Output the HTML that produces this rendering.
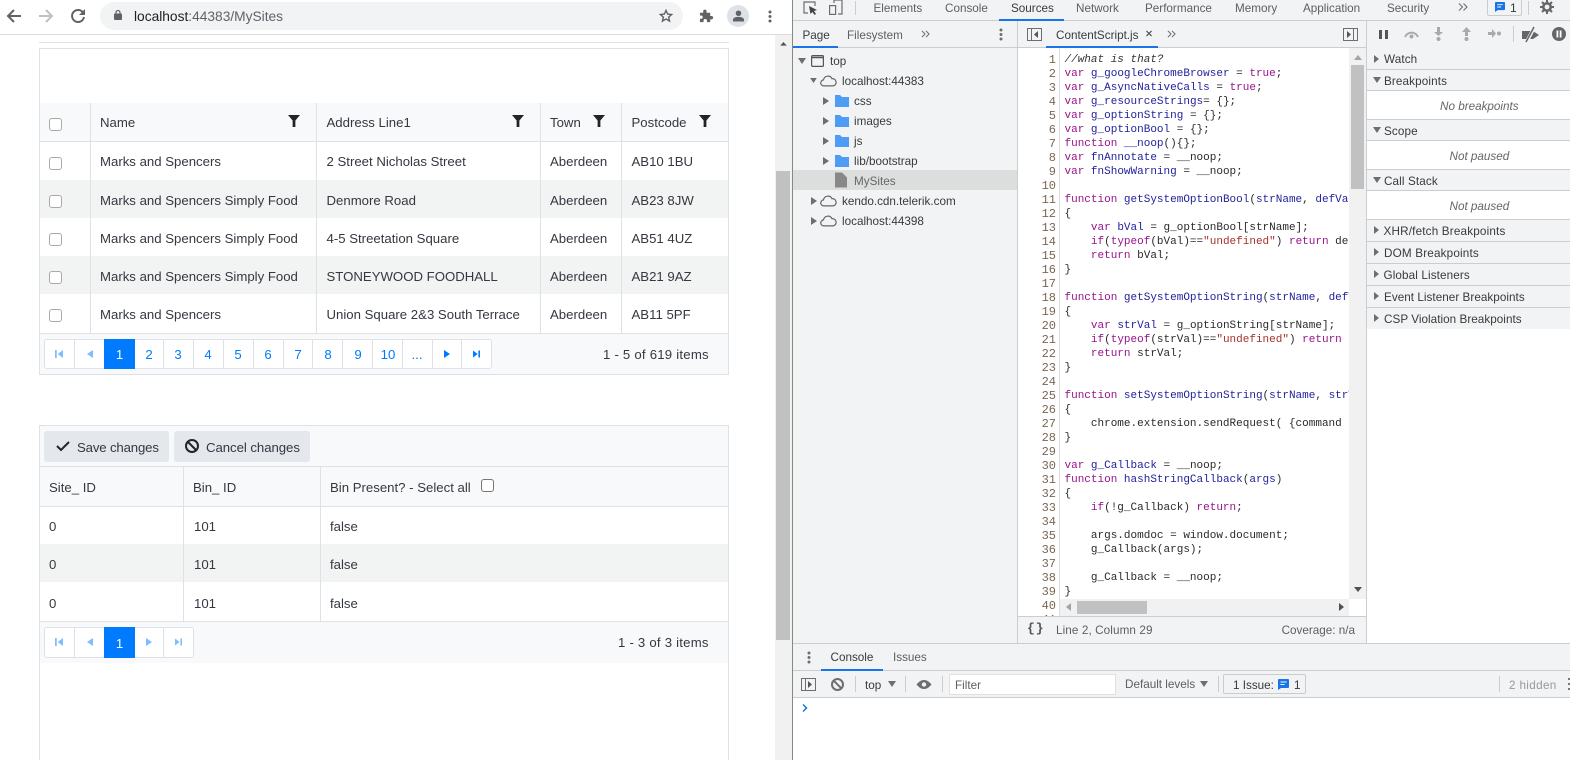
<!DOCTYPE html>
<html><head><meta charset="utf-8"><title>MySites</title>
<style>
html,body{margin:0;padding:0;width:1570px;height:760px;overflow:hidden;background:#fff}
body{position:relative;font-family:"Liberation Sans",sans-serif}
.b{position:absolute;display:block}
.t{position:absolute;white-space:nowrap;line-height:20px;font-size:13.2px;color:#343840}
.d{font-size:11.7px;color:#5f5f5f}
.c{font-size:11.7px;color:#3a3a3a}
.l{letter-spacing:.12px}
.p{position:absolute;width:11px;height:11px;border:1px solid #a9a9a9;border-radius:3px;background:#fff;box-sizing:content-box}
svg{position:absolute;display:block;overflow:visible}
.n{color:#007bff;text-align:center;width:30px;font-size:13.2px}
pre{position:absolute;margin:0;font:11px/14px "Liberation Mono",monospace;color:#2a2a2a}
i.k{font-style:normal;color:#96138a}
i.v{font-style:normal;color:#1f1f9a}
i.s{font-style:normal;color:#a5332a}
</style></head><body>

<!-- Chrome toolbar -->
<div class="b" style="left:0;top:0;width:792px;height:34px;background:#fff"></div>
<div class="b" style="left:0;top:34px;width:792px;height:1px;background:#dadce0"></div>
<svg style="left:6px;top:9px" width="15" height="14" viewBox="0 0 15 14"><path d="M15 7H2M8 1L2 7l6 6" fill="none" stroke="#5f6368" stroke-width="2"/></svg>
<svg style="left:39px;top:9px" width="15" height="14" viewBox="0 0 15 14"><path d="M0 7h13M7 1l6 6-6 6" fill="none" stroke="#bdc1c6" stroke-width="2"/></svg>
<svg style="left:70px;top:8px" width="16" height="16" viewBox="0 0 16 16"><path d="M13.300 5A6 6 0 1 0 14 9" fill="none" stroke="#5f6368" stroke-width="2"/><path d="M15 1v6H9z" fill="#5f6368"/></svg>
<div class="b" style="left:100px;top:2px;width:583px;height:28px;border-radius:14px;background:#f1f3f4"></div>
<svg style="left:114px;top:10px" width="8" height="10" viewBox="0 0 8 10"><path d="M2 4V2.500a2 2 0 0 1 4 0V4" fill="none" stroke="#5f6368" stroke-width="1.200"/><rect x="0" y="3.500" width="8" height="6.500" rx="1" fill="#5f6368"/></svg>
<span class="t" style="left:134px;top:7px;font-size:13.75px;color:#5f6368"><span style="color:#202124">localhost</span>:44383/MySites</span>
<svg style="left:659px;top:9px" width="14" height="14" viewBox="0 0 15 15"><path d="M7.500 1.500l1.800 4 4.200.4-3.200 2.900 1 4.200-3.800-2.200-3.800 2.200 1-4.200L1.500 5.900l4.200-.4z" fill="none" stroke="#5f6368" stroke-width="1.500"/></svg>
<svg style="left:699px;top:9px" width="14" height="14" viewBox="0 0 15 15"><path d="M1 4h3.500V2.500a1.800 1.800 0 0 1 3.600 0V4H12v3.500h1.300a1.800 1.800 0 0 1 0 3.600H12V14H8.500v-1.500a1.800 1.800 0 0 0-3.600 0V14H1v-3.500h1.200a1.800 1.800 0 0 0 0-3.600H1z" fill="#5f6368"/></svg>
<div class="b" style="left:727px;top:5px;width:22px;height:22px;border-radius:11px;background:#dee1e6"></div>
<svg style="left:733px;top:10px" width="11" height="12" viewBox="0 0 12 12"><circle cx="6" cy="3" r="3" fill="#5f6368"/><path d="M0 12V10c0-2 3-3 6-3s6 1 6 3v2z" fill="#5f6368"/></svg>
<svg style="left:768px;top:10px" width="4" height="13" viewBox="0 0 4 13"><circle cx="2" cy="2" r="1.500" fill="#5f6368"/><circle cx="2" cy="6.500" r="1.500" fill="#5f6368"/><circle cx="2" cy="11" r="1.500" fill="#5f6368"/></svg>

<!-- page top fragment -->
<div class="b" style="left:39px;top:42px;width:690px;height:1px;background:#e1e1e1"></div>

<!-- Scrollbar -->
<div class="b" style="left:775px;top:35px;width:17px;height:725px;background:#f1f1f1"></div>
<div class="b" style="left:776px;top:171px;width:14px;height:469px;background:#c1c1c1"></div>
<svg style="left:780px;top:42px" width="7" height="4" viewBox="0 0 8 5"><path d="M4 0l4 4.500H0z" fill="#505050"/></svg>

<!-- Grid 1 -->
<div class="b" style="left:39px;top:48px;width:690px;height:327px;box-sizing:border-box;border:1px solid #dee2e6;background:#fff"></div>
<div class="b" style="left:40px;top:103px;width:688px;height:38px;background:#f8f9fa"></div>
<div class="b" style="left:40px;top:141px;width:688px;height:1px;background:#dee2e6"></div>
<div class="b" style="left:40px;top:180px;width:688px;height:38px;background:#f2f3f3"></div>
<div class="b" style="left:40px;top:256px;width:688px;height:38px;background:#f2f3f3"></div>
<div class="b" style="left:40px;top:333px;width:688px;height:1px;background:#dee2e6"></div>
<div class="b" style="left:40px;top:334px;width:688px;height:40px;background:#f8f9fa"></div>
<div class="b" style="left:90px;top:103px;width:1px;height:230px;background:#dee2e6"></div>
<div class="b" style="left:316px;top:103px;width:1px;height:230px;background:#dee2e6"></div>
<div class="b" style="left:540px;top:103px;width:1px;height:230px;background:#dee2e6"></div>
<div class="b" style="left:621px;top:103px;width:1px;height:230px;background:#dee2e6"></div>

<div class="p" style="left:49px;top:118px"></div>
<div class="p" style="left:49px;top:157px"></div>
<div class="p" style="left:49px;top:195px"></div>
<div class="p" style="left:49px;top:233px"></div>
<div class="p" style="left:49px;top:271px"></div>
<div class="p" style="left:49px;top:309px"></div>

<span class="t" style="left:100px;top:113px">Name</span>
<span class="t" style="left:326.500px;top:113px">Address Line1</span>
<span class="t" style="left:550px;top:113px">Town</span>
<span class="t" style="left:631.500px;top:113px">Postcode</span>
<svg style="left:288px;top:115px" width="12" height="12" viewBox="0 0 13 13"><path d="M0 0h13L8 6v7H5V6z" fill="#212529"/></svg>
<svg style="left:512px;top:115px" width="12" height="12" viewBox="0 0 13 13"><path d="M0 0h13L8 6v7H5V6z" fill="#212529"/></svg>
<svg style="left:593px;top:115px" width="12" height="12" viewBox="0 0 13 13"><path d="M0 0h13L8 6v7H5V6z" fill="#212529"/></svg>
<svg style="left:699px;top:115px" width="12" height="12" viewBox="0 0 13 13"><path d="M0 0h13L8 6v7H5V6z" fill="#212529"/></svg>

<span class="t" style="left:100px;top:152px">Marks and Spencers</span>
<span class="t" style="left:326.500px;top:152px">2 Street Nicholas Street</span>
<span class="t" style="left:550px;top:152px">Aberdeen</span>
<span class="t" style="left:631.500px;top:152px">AB10 1BU</span>
<span class="t" style="left:100px;top:191px">Marks and Spencers Simply Food</span>
<span class="t" style="left:326.500px;top:191px">Denmore Road</span>
<span class="t" style="left:550px;top:191px">Aberdeen</span>
<span class="t" style="left:631.500px;top:191px">AB23 8JW</span>
<span class="t" style="left:100px;top:229px">Marks and Spencers Simply Food</span>
<span class="t" style="left:326.500px;top:229px">4-5 Streetation Square</span>
<span class="t" style="left:550px;top:229px">Aberdeen</span>
<span class="t" style="left:631.500px;top:229px">AB51 4UZ</span>
<span class="t" style="left:100px;top:267px">Marks and Spencers Simply Food</span>
<span class="t" style="left:326.500px;top:267px">STONEYWOOD FOODHALL</span>
<span class="t" style="left:550px;top:267px">Aberdeen</span>
<span class="t" style="left:631.500px;top:267px">AB21 9AZ</span>
<span class="t" style="left:100px;top:305px">Marks and Spencers</span>
<span class="t" style="left:326.500px;top:305px">Union Square 2&amp;3 South Terrace</span>
<span class="t" style="left:550px;top:305px">Aberdeen</span>
<span class="t" style="left:631.500px;top:305px">AB11 5PF</span>

<!-- Pager 1 -->
<div class="b" style="left:44px;top:339px;width:448px;height:30px;box-sizing:border-box;border:1px solid #dee2e6;border-radius:3px;background:#fff"></div>
<div class="b" style="left:74px;top:340px;width:1px;height:28px;background:#dee2e6"></div>
<div class="b" style="left:163px;top:340px;width:1px;height:28px;background:#dee2e6"></div>
<div class="b" style="left:193px;top:340px;width:1px;height:28px;background:#dee2e6"></div>
<div class="b" style="left:223px;top:340px;width:1px;height:28px;background:#dee2e6"></div>
<div class="b" style="left:253px;top:340px;width:1px;height:28px;background:#dee2e6"></div>
<div class="b" style="left:283px;top:340px;width:1px;height:28px;background:#dee2e6"></div>
<div class="b" style="left:312px;top:340px;width:1px;height:28px;background:#dee2e6"></div>
<div class="b" style="left:342px;top:340px;width:1px;height:28px;background:#dee2e6"></div>
<div class="b" style="left:372px;top:340px;width:1px;height:28px;background:#dee2e6"></div>
<div class="b" style="left:402px;top:340px;width:1px;height:28px;background:#dee2e6"></div>
<div class="b" style="left:432px;top:340px;width:1px;height:28px;background:#dee2e6"></div>
<div class="b" style="left:461px;top:340px;width:1px;height:28px;background:#dee2e6"></div>
<div class="b" style="left:104px;top:339px;width:31px;height:30px;background:#007bff"></div>
<svg style="left:55px;top:350px" width="8" height="8" viewBox="0 0 9 9"><path d="M0 0h2v9H0zM9 0v9L3 4.500z" fill="#7fbdff"/></svg>
<svg style="left:87px;top:350px" width="6" height="8" viewBox="0 0 6 8"><path d="M6 0v8L0 4z" fill="#7fbdff"/></svg>
<span class="t" style="left:104px;top:345px;width:31px;text-align:center;color:#fff;font-size:13.2px">1</span>
<span class="t n" style="left:134px;top:345px">2</span>
<span class="t n" style="left:163px;top:345px">3</span>
<span class="t n" style="left:193px;top:345px">4</span>
<span class="t n" style="left:223px;top:345px">5</span>
<span class="t n" style="left:253px;top:345px">6</span>
<span class="t n" style="left:283px;top:345px">7</span>
<span class="t n" style="left:313px;top:345px">8</span>
<span class="t n" style="left:343px;top:345px">9</span>
<span class="t n" style="left:373px;top:345px">10</span>
<span class="t n" style="left:402px;top:345px">...</span>
<svg style="left:444px;top:350px" width="6" height="8" viewBox="0 0 6 8"><path d="M0 0v8l6-4z" fill="#007bff"/></svg>
<svg style="left:473px;top:350px" width="7" height="8" viewBox="0 0 9 9"><path d="M7 0h2v9H7zM0 0v9l6-4.500z" fill="#007bff"/></svg>
<span class="t" style="left:603px;top:345px;letter-spacing:.22px">1 - 5 of 619 items</span>

<!-- Grid 2 -->
<div class="b" style="left:39px;top:425px;width:690px;height:340px;box-sizing:border-box;border:1px solid #dee2e6;background:#fff"></div>
<div class="b" style="left:40px;top:426px;width:688px;height:80px;background:#f8f9fa"></div>
<div class="b" style="left:40px;top:466px;width:688px;height:1px;background:#dee2e6"></div>
<div class="b" style="left:40px;top:506px;width:688px;height:1px;background:#dee2e6"></div>
<div class="b" style="left:40px;top:544px;width:688px;height:38px;background:#f2f3f3"></div>
<div class="b" style="left:40px;top:621px;width:688px;height:1px;background:#dee2e6"></div>
<div class="b" style="left:40px;top:622px;width:688px;height:41px;background:#f8f9fa"></div>
<div class="b" style="left:183px;top:467px;width:1px;height:154px;background:#dee2e6"></div>
<div class="b" style="left:320px;top:467px;width:1px;height:154px;background:#dee2e6"></div>
<div class="b" style="left:44px;top:431px;width:125px;height:31px;border-radius:3px;background:#e4e7eb"></div>
<div class="b" style="left:174px;top:431px;width:136px;height:31px;border-radius:3px;background:#e4e7eb"></div>
<svg style="left:56px;top:441px" width="14" height="10" viewBox="0 0 14 10"><path d="M1 5l4 4L13 1" fill="none" stroke="#212529" stroke-width="2"/></svg>
<svg style="left:185px;top:439px" width="14" height="14" viewBox="0 0 14 14"><circle cx="7" cy="7" r="6" fill="none" stroke="#212529" stroke-width="2"/><path d="M3 3l8 8" stroke="#212529" stroke-width="2"/></svg>
<span class="t" style="left:77px;top:438px;letter-spacing:-.15px">Save changes</span>
<span class="t" style="left:206px;top:438px;letter-spacing:-.05px">Cancel changes</span>
<span class="t" style="left:49px;top:478px">Site_ ID</span>
<span class="t" style="left:193px;top:478px">Bin_ ID</span>
<span class="t" style="left:330px;top:478px">Bin Present? - Select all</span>
<div class="p" style="left:481px;top:479px;border-color:#767676"></div>
<span class="t" style="left:49px;top:517px">0</span><span class="t" style="left:194px;top:517px">101</span><span class="t" style="left:330px;top:517px">false</span>
<span class="t" style="left:49px;top:555px">0</span><span class="t" style="left:194px;top:555px">101</span><span class="t" style="left:330px;top:555px">false</span>
<span class="t" style="left:49px;top:594px">0</span><span class="t" style="left:194px;top:594px">101</span><span class="t" style="left:330px;top:594px">false</span>
<!-- Pager 2 -->
<div class="b" style="left:44px;top:627px;width:150px;height:31px;box-sizing:border-box;border:1px solid #dee2e6;border-radius:3px;background:#fff"></div>
<div class="b" style="left:74px;top:628px;width:1px;height:29px;background:#dee2e6"></div>
<div class="b" style="left:163px;top:628px;width:1px;height:29px;background:#dee2e6"></div>
<div class="b" style="left:104px;top:627px;width:31px;height:31px;background:#007bff"></div>
<svg style="left:55px;top:638px" width="8" height="8" viewBox="0 0 9 9"><path d="M0 0h2v9H0zM9 0v9L3 4.500z" fill="#7fbdff"/></svg>
<svg style="left:87px;top:638px" width="6" height="8" viewBox="0 0 6 8"><path d="M6 0v8L0 4z" fill="#7fbdff"/></svg>
<span class="t" style="left:104px;top:634px;width:31px;text-align:center;color:#fff">1</span>
<svg style="left:146px;top:638px" width="6" height="8" viewBox="0 0 6 8"><path d="M0 0v8l6-4z" fill="#7fbdff"/></svg>
<svg style="left:175px;top:638px" width="7" height="8" viewBox="0 0 9 9"><path d="M7 0h2v9H7zM0 0v9l6-4.500z" fill="#7fbdff"/></svg>
<span class="t" style="left:618px;top:633px;letter-spacing:.22px">1 - 3 of 3 items</span>

<!-- DEVTOOLS -->
<div class="b" style="left:792px;top:0;width:1px;height:760px;background:#888"></div>
<div class="b" style="left:793px;top:0;width:777px;height:644px;background:#f1f3f4"></div>
<div class="b" style="left:793px;top:20px;width:777px;height:1px;background:#cbcdd1"></div>
<svg style="left:803px;top:1px" width="15" height="14" viewBox="0 0 15 14"><path d="M5 12H1V1h11v4" fill="none" stroke="#6e6e6e" stroke-width="1.200"/><path d="M6 5l8 4-3 1 2 3-1.500 1-2-3-2 2z" fill="#444"/></svg>
<svg style="left:829px;top:0" width="14" height="15" viewBox="0 0 14 15"><path d="M5 3V0h8v14H9" fill="none" stroke="#6e6e6e" stroke-width="1.200"/><rect x=".6" y="5.600" width="6" height="8.800" fill="none" stroke="#6e6e6e" stroke-width="1.200"/></svg>
<div class="b" style="left:855px;top:1px;width:1px;height:14px;background:#ccc"></div>
<span class="t d" style="left:873.500px;top:-1px">Elements</span>
<span class="t d" style="left:945px;top:-1px">Console</span>
<span class="t c" style="left:1011px;top:-1px">Sources</span>
<span class="t d" style="left:1076px;top:-1px">Network</span>
<span class="t d" style="left:1145px;top:-1px">Performance</span>
<span class="t d" style="left:1235px;top:-1px">Memory</span>
<span class="t d" style="left:1303px;top:-1px">Application</span>
<span class="t d" style="left:1387px;top:-1px">Security</span>
<svg style="left:1458px;top:3px" width="10" height="8" viewBox="0 0 10 8"><path d="M1 .500L4.500 4 1 7.500M5.500 .500L9 4 5.500 7.500" fill="none" stroke="#6e6e6e" stroke-width="1.100"/></svg>
<div class="b" style="left:999px;top:19px;width:65px;height:2px;background:#1a73e8"></div>
<div class="b" style="left:1487px;top:-2px;width:35px;height:18px;box-sizing:border-box;border:1px solid #ccc;border-radius:2px"></div>
<svg style="left:1495px;top:2px" width="10" height="10" viewBox="0 0 11 11"><path d="M1 0h9a1 1 0 0 1 1 1v7a1 1 0 0 1-1 1H3l-3 2V1a1 1 0 0 1 1-1z" fill="#1a73e8"/><path d="M2.500 3h6M2.500 5.500h4" stroke="#fff"/></svg>
<span class="t c" style="left:1510px;top:-2px;font-size:12px">1</span>
<div class="b" style="left:1528px;top:1px;width:1px;height:14px;background:#ccc"></div>
<svg style="left:1540px;top:0" width="14" height="14" viewBox="0 0 14 14"><circle cx="7" cy="7" r="3.700" fill="none" stroke="#666" stroke-width="2.600"/><path d="M7 0v3M7 11v3M0 7h3M11 7h3M2 2l2 2M10 10l2 2M12 2l-2 2M2 12l2-2" stroke="#666" stroke-width="2"/></svg>

<!-- Nav panel -->
<div class="b" style="left:793px;top:47px;width:573px;height:1px;background:#cbcdd1"></div>
<span class="t c" style="left:802.500px;top:26px">Page</span>
<span class="t d" style="left:847px;top:26px">Filesystem</span>
<svg style="left:921px;top:30px" width="9" height="8" viewBox="0 0 10 8"><path d="M1 .500L4.500 4 1 7.500M5.500 .500L9 4 5.500 7.500" fill="none" stroke="#6e6e6e" stroke-width="1.100"/></svg>
<div class="b" style="left:793px;top:46px;width:45px;height:2px;background:#1a73e8"></div>
<svg style="left:999px;top:28px" width="4" height="13" viewBox="0 0 4 13"><circle cx="2" cy="2" r="1.500" fill="#6e6e6e"/><circle cx="2" cy="6.500" r="1.500" fill="#6e6e6e"/><circle cx="2" cy="11" r="1.500" fill="#6e6e6e"/></svg>
<div class="b" style="left:1017px;top:21px;width:1px;height:622px;background:#cbcdd1"></div>
<div class="b" style="left:793px;top:170px;width:224px;height:20px;background:#dcdedd"></div>
<svg style="left:798px;top:58px" width="8" height="6" viewBox="0 0 8 6"><path d="M0 0h8L4 6z" fill="#6e6e6e"/></svg>
<svg style="left:811px;top:55px" width="13" height="12" viewBox="0 0 13 12"><rect x=".6" y=".6" width="11.800" height="10.800" rx="1" fill="none" stroke="#555" stroke-width="1.200"/><path d="M1 2.500h11" stroke="#555" stroke-width="1.500"/></svg>
<span class="t c" style="left:830px;top:52px">top</span>
<svg style="left:810px;top:78px" width="7" height="5" viewBox="0 0 8 6"><path d="M0 0h8L4 6z" fill="#6e6e6e"/></svg>
<svg style="left:820px;top:75px" width="17" height="12" viewBox="0 0 17 11"><path d="M4 10.400a3 3 0 0 1-.5-6A4.500 4.500 0 0 1 12 3.200a3.600 3.600 0 0 1 1 7.200z" fill="none" stroke="#666" stroke-width="1.200"/></svg>
<span class="t c" style="left:842px;top:72px">localhost:44383</span>
<svg style="left:823px;top:97px" width="6" height="8" viewBox="0 0 6 8"><path d="M0 0v8l6-4z" fill="#6e6e6e"/></svg>
<svg style="left:835px;top:95px" width="14" height="12" viewBox="0 0 14 12"><path d="M0 0h5l2 2h7v10H0z" fill="#4f9cf5"/></svg>
<span class="t c" style="left:854px;top:92px">css</span>
<svg style="left:823px;top:117px" width="6" height="8" viewBox="0 0 6 8"><path d="M0 0v8l6-4z" fill="#6e6e6e"/></svg>
<svg style="left:835px;top:115px" width="14" height="12" viewBox="0 0 14 12"><path d="M0 0h5l2 2h7v10H0z" fill="#4f9cf5"/></svg>
<span class="t c" style="left:854px;top:112px">images</span>
<svg style="left:823px;top:137px" width="6" height="8" viewBox="0 0 6 8"><path d="M0 0v8l6-4z" fill="#6e6e6e"/></svg>
<svg style="left:835px;top:135px" width="14" height="12" viewBox="0 0 14 12"><path d="M0 0h5l2 2h7v10H0z" fill="#4f9cf5"/></svg>
<span class="t c" style="left:854px;top:132px">js</span>
<svg style="left:823px;top:157px" width="6" height="8" viewBox="0 0 6 8"><path d="M0 0v8l6-4z" fill="#6e6e6e"/></svg>
<svg style="left:835px;top:155px" width="14" height="12" viewBox="0 0 14 12"><path d="M0 0h5l2 2h7v10H0z" fill="#4f9cf5"/></svg>
<span class="t c" style="left:854px;top:152px">lib/bootstrap</span>
<svg style="left:835px;top:172px" width="12" height="16" viewBox="0 0 12 15"><path d="M0 0h7l5 5v10H0z" fill="#888"/></svg>
<span class="t" style="left:854px;top:172px;font-size:11.7px;color:#666">MySites</span>
<svg style="left:811px;top:197px" width="6" height="8" viewBox="0 0 6 8"><path d="M0 0v8l6-4z" fill="#6e6e6e"/></svg>
<svg style="left:820px;top:195px" width="17" height="12" viewBox="0 0 17 11"><path d="M4 10.400a3 3 0 0 1-.5-6A4.500 4.500 0 0 1 12 3.200a3.600 3.600 0 0 1 1 7.200z" fill="none" stroke="#666" stroke-width="1.200"/></svg>
<span class="t c" style="left:842px;top:192px">kendo.cdn.telerik.com</span>
<svg style="left:811px;top:217px" width="6" height="8" viewBox="0 0 6 8"><path d="M0 0v8l6-4z" fill="#6e6e6e"/></svg>
<svg style="left:820px;top:215px" width="17" height="12" viewBox="0 0 17 11"><path d="M4 10.400a3 3 0 0 1-.5-6A4.500 4.500 0 0 1 12 3.200a3.600 3.600 0 0 1 1 7.200z" fill="none" stroke="#666" stroke-width="1.200"/></svg>
<span class="t c" style="left:842px;top:212px">localhost:44398</span>

<!-- Editor -->
<svg style="left:1027px;top:28px" width="15" height="13" viewBox="0 0 15 13"><rect x=".5" y=".5" width="14" height="12" fill="none" stroke="#6e6e6e"/><path d="M4.500 0v13" stroke="#6e6e6e"/><path d="M11 3v7L7 6.500z" fill="#555"/></svg>
<span class="t c" style="left:1056px;top:26px">ContentScript.js</span>
<svg style="left:1146px;top:30px" width="6" height="7" viewBox="0 0 7 7"><path d="M.5.500l6 6M6.500.500l-6 6" stroke="#555" stroke-width="1.400"/></svg>
<svg style="left:1167px;top:30px" width="9" height="8" viewBox="0 0 10 8"><path d="M1 .500L4.500 4 1 7.500M5.500 .500L9 4 5.500 7.500" fill="none" stroke="#6e6e6e" stroke-width="1.100"/></svg>
<div class="b" style="left:1046px;top:46px;width:112px;height:2px;background:#1a73e8"></div>
<svg style="left:1343px;top:28px" width="15" height="13" viewBox="0 0 15 13"><rect x=".5" y=".5" width="14" height="12" fill="none" stroke="#6e6e6e"/><path d="M10.500 0v13" stroke="#6e6e6e"/><path d="M4 3v7l4-3.500z" fill="#555"/></svg>
<div class="b" style="left:1018px;top:48px;width:348px;height:568px;background:#fff"></div>
<div class="b" style="left:1018px;top:616px;width:348px;height:1px;background:#cbcdd1"></div>
<div class="b" style="left:1059px;top:48px;width:1px;height:568px;background:#ddd"></div>
<div class="b" style="left:1018px;top:48px;width:38px;height:568px;overflow:hidden">
<pre style="left:0;top:5px;width:38px;text-align:right;color:#7a6652;font-size:12px">1
2
3
4
5
6
7
8
9
10
11
12
13
14
15
16
17
18
19
20
21
22
23
24
25
26
27
28
29
30
31
32
33
34
35
36
37
38
39
40
41</pre></div>
<div class="b" style="left:1060px;top:48px;width:289px;height:551px;overflow:hidden">
<pre style="left:4.500px;top:5px"><i style="color:#333">//what is that?</i>
<i class="k">var</i> <i class="v">g_googleChromeBrowser</i> = <i class="k">true</i>;
<i class="k">var</i> <i class="v">g_AsyncNativeCalls</i> = <i class="k">true</i>;
<i class="k">var</i> <i class="v">g_resourceStrings</i>= {};
<i class="k">var</i> <i class="v">g_optionString</i> = {};
<i class="k">var</i> <i class="v">g_optionBool</i> = {};
<i class="k">function</i> <i class="v">__noop</i>(){};
<i class="k">var</i> <i class="v">fnAnnotate</i> = __noop;
<i class="k">var</i> <i class="v">fnShowWarning</i> = __noop;

<i class="k">function</i> <i class="v">getSystemOptionBool</i>(<i class="v">strName</i>, <i class="v">defVal</i>)
{
    <i class="k">var</i> <i class="v">bVal</i> = g_optionBool[strName];
    <i class="k">if</i>(<i class="k">typeof</i>(bVal)==<i class="s">"undefined"</i>) <i class="k">return</i> defVal;
    <i class="k">return</i> bVal;
}

<i class="k">function</i> <i class="v">getSystemOptionString</i>(<i class="v">strName</i>, <i class="v">defVal</i>)
{
    <i class="k">var</i> <i class="v">strVal</i> = g_optionString[strName];
    <i class="k">if</i>(<i class="k">typeof</i>(strVal)==<i class="s">"undefined"</i>) <i class="k">return</i> defVal;
    <i class="k">return</i> strVal;
}

<i class="k">function</i> <i class="v">setSystemOptionString</i>(<i class="v">strName</i>, <i class="v">strVal</i>)
{
    chrome.extension.sendRequest( {command : 1
}

<i class="k">var</i> <i class="v">g_Callback</i> = __noop;
<i class="k">function</i> <i class="v">hashStringCallback</i>(<i class="v">args</i>)
{
    <i class="k">if</i>(!g_Callback) <i class="k">return</i>;

    args.domdoc = window.document;
    g_Callback(args);

    g_Callback = __noop;
}</pre></div>
<!-- editor scrollbars -->
<div class="b" style="left:1349px;top:48px;width:17px;height:551px;background:#f1f1f1"></div>
<div class="b" style="left:1351px;top:65px;width:13px;height:124px;background:#c1c1c1"></div>
<svg style="left:1354px;top:55px" width="8" height="5" viewBox="0 0 8 5"><path d="M4 0l4 5H0z" fill="#a3a3a3"/></svg>
<svg style="left:1354px;top:587px" width="8" height="5" viewBox="0 0 8 5"><path d="M0 0h8L4 5z" fill="#505050"/></svg>
<div class="b" style="left:1060px;top:599px;width:289px;height:17px;background:#f1f1f1"></div>
<div class="b" style="left:1077px;top:601px;width:70px;height:13px;background:#c1c1c1"></div>
<svg style="left:1066px;top:603px" width="5" height="8" viewBox="0 0 5 8"><path d="M5 0v8L0 4z" fill="#a3a3a3"/></svg>
<svg style="left:1339px;top:603px" width="5" height="8" viewBox="0 0 5 8"><path d="M0 0v8l5-4z" fill="#505050"/></svg>
<!-- status -->
<span class="t" style="left:1027px;top:619px;font:bold 13px/20px 'Liberation Mono',monospace;color:#555;letter-spacing:1px">{}</span>
<span class="t d" style="left:1056px;top:621px;letter-spacing:.1px">Line 2, Column 29</span>
<span class="t d" style="right:215px;top:621px">Coverage: n/a</span>

<!-- Debugger sidebar -->
<div class="b" style="left:1366px;top:21px;width:1px;height:622px;background:#cbcdd1"></div>
<div class="b" style="left:1367px;top:48px;width:203px;height:595px;background:#fff"></div>
<svg style="left:1379px;top:30px" width="9" height="9" viewBox="0 0 9 9"><path d="M0 0h3v9H0zM6 0h3v9H6z" fill="#555"/></svg>
<svg style="left:1403px;top:29px" width="17" height="10" viewBox="0 0 17 10"><path d="M2 8a7 7 0 0 1 13 0" fill="none" stroke="#aaa" stroke-width="2"/><circle cx="8.500" cy="7.500" r="2" fill="#aaa"/></svg>
<svg style="left:1434px;top:27px" width="9" height="14" viewBox="0 0 9 14"><path d="M3 0h3v5h3L4.500 9 0 5h3z" fill="#aaa"/><circle cx="4.500" cy="12" r="2" fill="#aaa"/></svg>
<svg style="left:1462px;top:27px" width="9" height="14" viewBox="0 0 9 14"><path d="M3 9h3V5h3L4.500 0 0 5h3z" fill="#aaa"/><circle cx="4.500" cy="12" r="2" fill="#aaa"/></svg>
<svg style="left:1488px;top:29px" width="13" height="9" viewBox="0 0 13 9"><path d="M0 3h4V0l4 4.500L4 9V6H0z" fill="#aaa"/><circle cx="11" cy="4.500" r="2" fill="#aaa"/></svg>
<div class="b" style="left:1513px;top:26px;width:1px;height:16px;background:#ccc"></div>
<svg style="left:1522px;top:26px" width="18" height="17" viewBox="0 0 18 17"><path d="M0 5h11l6 4-6 4H0z" fill="#666"/><path d="M13 0L4 17" stroke="#f1f3f4" stroke-width="3.500"/><path d="M12 1L4 16" stroke="#666" stroke-width="1.500"/></svg>
<svg style="left:1552px;top:27px" width="14" height="14" viewBox="0 0 14 14"><circle cx="7" cy="7" r="7" fill="#666"/><path d="M4.500 3.500h1.800v7H4.500zM7.700 3.500h1.800v7H7.700z" fill="#fff"/></svg>

<div class="b" style="left:1367px;top:48px;width:203px;height:21px;background:#f1f3f4"></div>
<div class="b" style="left:1367px;top:69px;width:203px;height:1px;background:#cbcdd1"></div>
<div class="b" style="left:1367px;top:70px;width:203px;height:20px;background:#f1f3f4"></div>
<div class="b" style="left:1367px;top:90px;width:203px;height:1px;background:#cbcdd1"></div>
<div class="b" style="left:1367px;top:119px;width:203px;height:1px;background:#cbcdd1"></div>
<div class="b" style="left:1367px;top:120px;width:203px;height:20px;background:#f1f3f4"></div>
<div class="b" style="left:1367px;top:140px;width:203px;height:1px;background:#cbcdd1"></div>
<div class="b" style="left:1367px;top:169px;width:203px;height:1px;background:#cbcdd1"></div>
<div class="b" style="left:1367px;top:170px;width:203px;height:20px;background:#f1f3f4"></div>
<div class="b" style="left:1367px;top:190px;width:203px;height:1px;background:#cbcdd1"></div>
<div class="b" style="left:1367px;top:219px;width:203px;height:1px;background:#cbcdd1"></div>
<div class="b" style="left:1367px;top:220px;width:203px;height:109px;background:#f1f3f4"></div>
<div class="b" style="left:1367px;top:241px;width:203px;height:1px;background:#cbcdd1"></div>
<div class="b" style="left:1367px;top:263px;width:203px;height:1px;background:#cbcdd1"></div>
<div class="b" style="left:1367px;top:285px;width:203px;height:1px;background:#cbcdd1"></div>
<div class="b" style="left:1367px;top:307px;width:203px;height:1px;background:#cbcdd1"></div>
<svg style="left:1374px;top:55px" width="5" height="8" viewBox="0 0 5 8"><path d="M0 0v8l5-4z" fill="#6e6e6e"/></svg>
<svg style="left:1373px;top:77px" width="8" height="6" viewBox="0 0 8 6"><path d="M0 0h8L4 6z" fill="#6e6e6e"/></svg>
<svg style="left:1373px;top:127px" width="8" height="6" viewBox="0 0 8 6"><path d="M0 0h8L4 6z" fill="#6e6e6e"/></svg>
<svg style="left:1373px;top:177px" width="8" height="6" viewBox="0 0 8 6"><path d="M0 0h8L4 6z" fill="#6e6e6e"/></svg>
<svg style="left:1374px;top:226px" width="5" height="8" viewBox="0 0 5 8"><path d="M0 0v8l5-4z" fill="#6e6e6e"/></svg>
<svg style="left:1374px;top:248px" width="5" height="8" viewBox="0 0 5 8"><path d="M0 0v8l5-4z" fill="#6e6e6e"/></svg>
<svg style="left:1374px;top:270px" width="5" height="8" viewBox="0 0 5 8"><path d="M0 0v8l5-4z" fill="#6e6e6e"/></svg>
<svg style="left:1374px;top:292px" width="5" height="8" viewBox="0 0 5 8"><path d="M0 0v8l5-4z" fill="#6e6e6e"/></svg>
<svg style="left:1374px;top:314px" width="5" height="8" viewBox="0 0 5 8"><path d="M0 0v8l5-4z" fill="#6e6e6e"/></svg>
<span class="t c l" style="left:1384px;top:50px">Watch</span>
<span class="t c l" style="left:1384px;top:72px">Breakpoints</span>
<span class="t" style="left:1440px;top:97px;font-size:11.7px;font-style:italic;color:#666">No breakpoints</span>
<span class="t c l" style="left:1384px;top:122px">Scope</span>
<span class="t" style="left:1449.500px;top:147px;font-size:11.7px;font-style:italic;color:#666">Not paused</span>
<span class="t c l" style="left:1384px;top:172px">Call Stack</span>
<span class="t" style="left:1449.500px;top:197px;font-size:11.7px;font-style:italic;color:#666">Not paused</span>
<span class="t c" style="left:1383.500px;top:222px;letter-spacing:.18px">XHR/fetch Breakpoints</span>
<span class="t c" style="left:1384px;top:244px;letter-spacing:.18px">DOM Breakpoints</span>
<span class="t c" style="left:1383.500px;top:266px;letter-spacing:.12px">Global Listeners</span>
<span class="t c" style="left:1384px;top:288px;letter-spacing:.04px">Event Listener Breakpoints</span>
<span class="t c" style="left:1384px;top:310px;letter-spacing:.04px">CSP Violation Breakpoints</span>

<!-- Drawer -->
<div class="b" style="left:793px;top:643px;width:777px;height:1px;background:#cbcdd1"></div>
<div class="b" style="left:793px;top:644px;width:777px;height:53px;background:#f1f3f4"></div>
<div class="b" style="left:793px;top:670px;width:777px;height:1px;background:#cbcdd1"></div>
<div class="b" style="left:793px;top:697px;width:777px;height:1px;background:#cbcdd1"></div>
<div class="b" style="left:793px;top:698px;width:777px;height:62px;background:#fff"></div>
<svg style="left:807px;top:651px" width="4" height="13" viewBox="0 0 4 13"><circle cx="2" cy="2" r="1.500" fill="#6e6e6e"/><circle cx="2" cy="6.500" r="1.500" fill="#6e6e6e"/><circle cx="2" cy="11" r="1.500" fill="#6e6e6e"/></svg>
<span class="t c" style="left:830.500px;top:648px">Console</span>
<span class="t d" style="left:893px;top:648px">Issues</span>
<div class="b" style="left:821px;top:669px;width:62px;height:2px;background:#1a73e8"></div>
<svg style="left:801px;top:678px" width="15" height="13" viewBox="0 0 15 13"><rect x=".5" y=".5" width="14" height="12" fill="none" stroke="#6e6e6e"/><path d="M4.500 0v13" stroke="#6e6e6e"/><path d="M7 3v7l4-3.500z" fill="#555"/></svg>
<svg style="left:831px;top:678px" width="13" height="13" viewBox="0 0 13 13"><circle cx="6.500" cy="6.500" r="5.500" fill="none" stroke="#6e6e6e" stroke-width="2"/><path d="M2.700 2.700l7.600 7.600" stroke="#6e6e6e" stroke-width="2"/></svg>
<div class="b" style="left:855px;top:676px;width:1px;height:16px;background:#ccc"></div>
<span class="t c" style="left:865px;top:676px">top</span>
<svg style="left:888px;top:681px" width="8" height="6" viewBox="0 0 8 6"><path d="M0 0h8L4 6z" fill="#6e6e6e"/></svg>
<div class="b" style="left:905px;top:676px;width:1px;height:16px;background:#ccc"></div>
<svg style="left:916px;top:680px" width="16" height="9" viewBox="0 0 15 9"><path d="M0 4.500C3 1 5 0 7.500 0S12 1 15 4.500C12 8 10 9 7.500 9S3 8 0 4.500z" fill="#6e6e6e"/><circle cx="7.500" cy="4.500" r="2.200" fill="#f1f3f4"/></svg>
<div class="b" style="left:942px;top:676px;width:1px;height:16px;background:#ccc"></div>
<div class="b" style="left:949px;top:674px;width:167px;height:21px;box-sizing:border-box;border:1px solid #e0e0e0;background:#fff"></div>
<span class="t d" style="left:955px;top:676px">Filter</span>
<span class="t d" style="left:1125px;top:675px">Default levels</span>
<svg style="left:1200px;top:681px" width="8" height="6" viewBox="0 0 8 6"><path d="M0 0h8L4 6z" fill="#6e6e6e"/></svg>
<div class="b" style="left:1218px;top:676px;width:1px;height:16px;background:#ccc"></div>
<div class="b" style="left:1223px;top:674px;width:83px;height:20px;box-sizing:border-box;border:1px solid #ccc;border-radius:2px"></div>
<span class="t c" style="left:1233px;top:676px">1 Issue:</span>
<svg style="left:1278px;top:679px" width="11" height="11" viewBox="0 0 11 11"><path d="M1 0h9a1 1 0 0 1 1 1v7a1 1 0 0 1-1 1H3l-3 2V1a1 1 0 0 1 1-1z" fill="#1a73e8"/><path d="M2.500 3h6M2.500 5.500h4" stroke="#fff"/></svg>
<span class="t c" style="left:1294px;top:676px">1</span>
<div class="b" style="left:1499px;top:676px;width:1px;height:16px;background:#ccc"></div>
<span class="t" style="left:1509px;top:676px;font-size:11.7px;color:#999;letter-spacing:.35px">2 hidden</span>
<svg style="left:1568px;top:678px" width="2" height="12" viewBox="0 0 2 12"><path d="M0 1h2M0 6h2M0 11h2" stroke="#777" stroke-width="2"/></svg>
<svg style="left:802px;top:704px" width="6" height="8" viewBox="0 0 6 8"><path d="M1 .500L4.500 4 1 7.500" fill="none" stroke="#1a73e8" stroke-width="1.500"/></svg>
</body></html>
